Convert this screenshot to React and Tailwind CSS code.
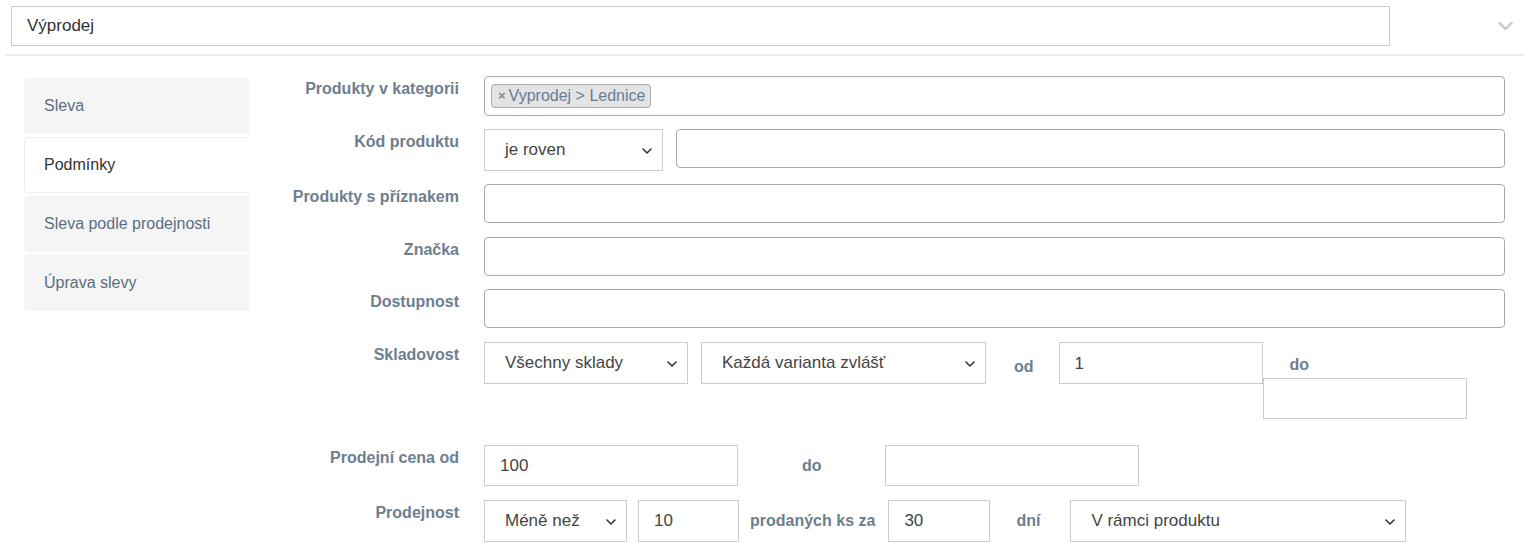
import React from "react";

const font = { fontFamily: '"Liberation Sans", Arial, sans-serif' };

function Chevron({ className = "" }) {
  return (
    <svg viewBox="0 0 10 6" className={className} fill="none" stroke="currentColor" strokeWidth="1.6" strokeLinecap="round" strokeLinejoin="round">
      <path d="M1 1l4 4 4-4" />
    </svg>
  );
}

function Select({ value, className = "" }) {
  return (
    <div className={`relative flex h-[42px] items-center border border-[#cccccc] bg-white pl-[20px] text-[17px] text-[#444] ${className}`}>
      <span>{value}</span>
      <Chevron className="absolute right-[10px] top-[18px] h-[6px] w-[10px] text-[#333]" />
    </div>
  );
}

function Box({ value = "", className = "" }) {
  return (
    <div className={`flex h-[41px] items-center border border-[#cccccc] bg-white pl-[15px] text-[17px] text-[#444] ${className}`}>
      {value}
    </div>
  );
}

function Rounded({ className = "", children }) {
  return (
    <div className={`h-[39px] rounded-[4px] border border-[#aaaaaa] bg-white ${className}`}>{children}</div>
  );
}

function Row({ label, className = "", children }) {
  return (
    <div className={`flex ${className}`}>
      <div className="w-[210px] shrink-0 pt-[1px] text-right text-[16px] font-bold text-[#6e7e8f]">{label}</div>
      <div className="ml-[25px] flex-1">{children}</div>
    </div>
  );
}

function Inline({ children, className = "" }) {
  return <span className={`text-[16px] font-bold text-[#6e7e8f] ${className}`}>{children}</span>;
}

export default function App() {
  const tabs = ["Sleva", "Podmínky", "Sleva podle prodejnosti", "Úprava slevy"];
  return (
    <div className="h-[551px] w-[1529px] overflow-hidden bg-white" style={font}>
      <div className="flex items-center pl-[11px] pt-[6px]">
        <div className="flex h-[40px] w-[1379px] items-center border border-[#cccccc] pl-[15px] text-[17px] text-[#333]">
          Výprodej
        </div>
        <Chevron className="ml-[108px] h-[10px] w-[15px] text-[#c4c8cd]" />
      </div>
      <div className="mx-[5px] mt-[8px] h-[2px] bg-[#e8ebef]" />

      <div className="flex pt-[20px]">
        <div className="ml-[24px] mt-[2px] flex w-[225px] shrink-0 flex-col gap-[3px]">
          {tabs.map((t, i) =>
            i === 1 ? (
              <div key={t} className="flex h-[56px] items-center rounded-l-[4px] border border-r-0 border-[#eeeeee] bg-white pl-[19px] text-[16px] text-[#333]">
                {t}
              </div>
            ) : (
              <div key={t} className="flex h-[56px] items-center rounded-l-[4px] bg-[#f5f5f5] pl-[20px] text-[16px] text-[#5d6e80]">
                {t}
              </div>
            )
          )}
        </div>

        <div className="flex-1">
          <Row label="Produkty v kategorii">
            <Rounded className="mr-[24px] flex h-[40px] items-center pl-[6px]">
              <span className="flex h-[24px] items-center rounded-[4px] border border-[#aaaaaa] bg-[#e4e4e4] pl-[6px] pr-[5px] text-[16px] text-[#6a7d92]">
                <span className="mr-[3px] text-[13px] font-bold text-[#888]">×</span>Vyprodej &gt; Lednice
              </span>
            </Rounded>
          </Row>

          <Row label="Kód produktu" className="mt-[13px]">
            <div className="mr-[24px] flex gap-[13px]">
              <Select value="je roven" className="w-[179px]" />
              <Rounded className="flex-1" />
            </div>
          </Row>

          <Row label="Produkty s příznakem" className="mt-[13px]">
            <Rounded className="mr-[24px]" />
          </Row>

          <Row label="Značka" className="mt-[14px]">
            <Rounded className="mr-[24px]" />
          </Row>

          <Row label="Dostupnost" className="mt-[13px]">
            <Rounded className="mr-[24px]" />
          </Row>

          <Row label="Skladovost" className="mt-[14px]">
            <div className="flex items-start">
              <Select value="Všechny sklady" className="w-[204px]" />
              <Select value="Každá varianta zvlášť" className="ml-[13px] w-[285px]" />
              <Inline className="ml-[28px] mt-[13px]">od</Inline>
              <div className="ml-[25px] flex h-[42px] w-[204px] items-start border border-[#cccccc] pl-[15px] pt-[8px] text-[17px] text-[#444]">
                1
              </div>
              <div className="flex flex-col">
                <Inline className="ml-[27px] mt-[13px] leading-[20px]">do</Inline>
                <Box className="mt-[3px] w-[204px]" />
              </div>
            </div>
          </Row>

          <Row label="Prodejní cena od" className="mt-[26px]">
            <div className="flex items-center">
              <Box value="100" className="w-[254px]" />
              <Inline className="ml-[64px]">do</Inline>
              <Box className="ml-[63px] w-[254px]" />
            </div>
          </Row>

          <Row label="Prodejnost" className="mt-[14px]">
            <div className="flex items-center">
              <Select value="Méně než" className="w-[143px]" />
              <Box value="10" className="ml-[11px] h-[42px] w-[101px]" />
              <Inline className="ml-[11px]">prodaných ks za</Inline>
              <Box value="30" className="ml-[13px] h-[42px] w-[102px]" />
              <Inline className="ml-[26px]">dní</Inline>
              <Select value="V rámci produktu" className="ml-[30px] w-[336px]" />
            </div>
          </Row>
        </div>
      </div>
    </div>
  );
}
